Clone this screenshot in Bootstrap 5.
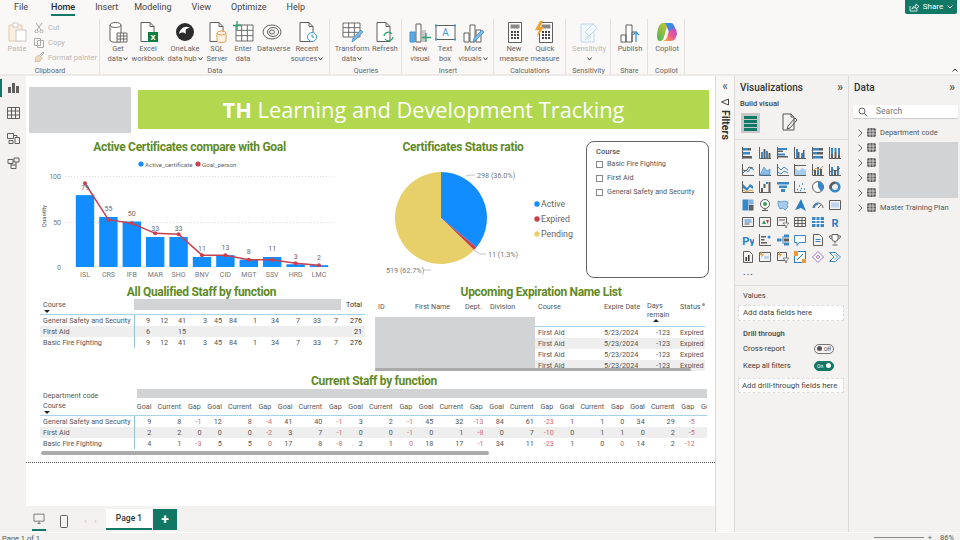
<!DOCTYPE html>
<html lang="en">
<head>
  <meta charset="UTF-8">
  <title>TH Learning and Development Tracking</title>
  <link href="https://cdn.jsdelivr.net/npm/bootstrap@5.3.3/dist/css/bootstrap.min.css" rel="stylesheet">
  <style>
    html, body { height: 540px; overflow: hidden; }
    body { font-family: "Roboto", "Liberation Sans", sans-serif; font-size: 7.6px; color: #3b3a39; background: #f3f2f1; line-height: 10px; }
    svg { display: block; }
    .pb-menu { height: 16px; background: #f9f8f7; padding-left: 14px; font-size: 9px; line-height: 15px; color: #444; }
    .pb-menu-item { white-space: nowrap; }
    .pb-menu-on { font-weight: 500; color: #252423; border-bottom: 2px solid #117865; height: 16px; }
    .pb-share { background: #117865; color: #fff; width: 52px; height: 14px; margin: 0 3px 0 auto; border-radius: 0 0 2px 2px; font-size: 8px; line-height: 14px; }
    .pb-ribbon { height: 60px; background: #f9f8f7; border-bottom: 2px solid #eceae8; color: #666; }
    .pb-group { height: 58px; padding-top: 5px; position: relative; }
    .pb-group::after { content: ""; position: absolute; right: 0; top: 3px; bottom: 0; width: 1px; background: #e3e1df; }
    .pb-glabel { position: absolute; left: 0; right: 0; top: 50px; text-align: center; font-size: 7.2px; color: #666; }
    .pb-rbtn { text-align: center; font-size: 7.5px; white-space: nowrap; }
    .pb-rbtn svg { margin: 0 auto 1px; }
    .pb-off { color: #b9b7b5; }
    .pb-small { height: 15px; font-size: 7.5px; color: #b9b7b5; white-space: nowrap; }
    .pb-collapse { margin: auto 2px 2px auto; }
    .pb-rail { width: 26px; background: #f3f2f1; border-left: 2px solid transparent; position: relative; }
    .pb-rail::before { content: ""; position: absolute; left: -2px; top: 3px; width: 2px; height: 18px; background: #117865; }
    .pb-rail svg { margin: 6px 0 0 5px; }
    .pb-center { width: 689px; }
    .pb-canvas { height: 430px; background: #fff; }
    .pb-report { height: 387px; border-bottom: 1px dotted #555; overflow: hidden; }
    .pb-photo { background: #d2d3d5; }
    .pb-banner { width: 571px; height: 39px; margin: 3px 0 0 7px; background: #b1d84f; color: #fff; font-family: "Open Sans", sans-serif; font-size: 21.8px; line-height: 39px; text-align: center; white-space: nowrap; }
    .pb-title { font-size: 12px; letter-spacing: -.3px; font-weight: 700; color: #5f8a26; text-align: center; line-height: 14px; white-space: nowrap; }
    .pb-slicer { width: 123px; height: 137px; margin: 2px 0 0 4px; border: 1px solid #666; border-radius: 8px; padding: 5px 9px; color: #555; }
    .pb-check { width: 7px; height: 7px; border: 1px solid #888; margin-right: 4px; flex: none; }
    .pb-slrow { height: 14px; font-size: 7.2px; white-space: nowrap; }
    .pb-tbl.table { --bs-table-bg: transparent; --bs-table-color: #555; color: #555; table-layout: fixed; margin: 0; font-size: 7.2px; line-height: 11px; border-color: transparent; }
    .pb-tbl.table > :not(caption) > * > * { padding: 0 3px; border: 0; white-space: nowrap; overflow: hidden; font-weight: 400; box-shadow: none; }
    .pb-tbl.table > thead > tr > .pb-tight { padding: 0; }
    .pb-tbl.table > tbody > tr > .pb-pad7 { padding-right: 7px; }
    .pb-tbl tr.pb-alt { --bs-table-bg: #eeeeee; }
    .pb-tbl .pb-num { text-align: right; }
    .pb-tbl .pb-first { text-align: left; padding-left: 3px; border-right: 1px solid #8cc4e3 !important; }
    .pb-tbl .pb-headline > * { border-bottom: 1px solid #a7d3ea !important; }
    .pb-tbl .pb-bold { font-weight: 700; color: #333; }
    .pb-tbl .pb-neg { color: #cf6f7c; }
    .pb-caret { width: 0; height: 0; border: 3px solid transparent; border-top-color: #222; margin: 0 0 -4px 1px; }
    .pb-caret-up { width: 0; height: 0; border: 3px solid transparent; border-bottom-color: #222; margin: -3px 0 0 6px; }
    .pb-wrap1 { width: 325px; margin-left: 14px; }
    .pb-wrap2 { width: 330px; margin-left: 10px; position: relative; }
    .pb-clip2 { height: 70px; overflow: hidden; }
    .pb-cover { position: absolute; left: 0; top: 32px; width: 160px; height: 54px; }
    .pb-scroll2 { position: absolute; left: 0; top: 83px; width: 316px; height: 3px; background: #aaa; border-radius: 2px; }
    .pb-dot { position: absolute; right: 0; top: 18px; width: 3px; height: 3px; background: #999; border-radius: 50%; }
    .pb-wrap3 { width: 667px; margin-left: 14px; overflow: hidden; }
    .pb-wrap3 table { width: 692px !important; }
    .pb-scroll3 { width: 448px; height: 4px; margin: 2px 0 0 1px; background: #aaa; border-radius: 2px; }
    .pb-tabs { height: 23px; margin-top: 3px; background: #f3f2f1; }
    .pb-tab { width: 46px; height: 21px; background: #fff; border-bottom: 2px solid #117865; line-height: 19px; text-align: center; font-size: 8.5px; font-weight: 500; color: #333; }
    .pb-add { width: 24px; height: 21px; background: #117865; color: #fff; font-size: 14px; font-weight: 700; line-height: 20px; text-align: center; margin-left: 1px; }
    .pb-filters { width: 20px; background: #f9f8f7; border-left: 1px solid #dcdad8; border-right: 1px solid #dcdad8; }
    .pb-ftext { writing-mode: vertical-rl; font-size: 10.5px; font-weight: 700; color: #333; line-height: 18px; }
    .pb-viz { width: 114px; border-right: 1px solid #dcdad8; }
    .pb-data { width: 111px; }
    .pb-phead { height: 14px; margin-top: 5px; padding: 0 5px; font-size: 10px; font-weight: 500; line-height: 14px; color: #333; }
    .pb-chev { color: #555; font-size: 12px; line-height: 12px; }
    .pb-sub { font-size: 7.6px; font-weight: 500; color: #444; }
    .pb-vbtn { height: 20px; }
    .pb-vbtn-on { width: 19px; height: 20px; background: #c8c8c8; padding: 3px; }
    .pb-stripe { background: #117865; height: 3px; margin-bottom: 1px; }
    .pb-vgrid { display: grid; grid-template-columns: repeat(6, 17.5px); grid-auto-rows: 17.4px; padding-left: 4px; margin-top: 4px; }
    .pb-vcell { display: flex; align-items: center; justify-content: center; }
    .pb-line { border-top: 1px solid #dedcda; }
    .pb-field { width: 106px; margin-left: 3px; background: #fff; border: 1px dashed #ddd; font-size: 7.8px; color: #444; padding-left: 4px; }
    .pb-toggle { width: 20px; height: 10px; border-radius: 5px; border: 1px solid #777; font-size: 5px; line-height: 8px; padding: 0 2px; }
    .pb-toggle-on { background: #117865; border-color: #117865; color: #fff; }
    .pb-knob { width: 5px; height: 5px; border-radius: 50%; background: #555; flex: none; }
    .pb-search { height: 13px; margin: 10px 2px 0 4px; background: #fff; border-radius: 2px; box-shadow: 0 1px 1px #ccc; color: #777; font-size: 8.5px; line-height: 13px; padding-left: 5px; }
    .pb-tree { position: relative; margin-top: 7px; }
    .pb-trow { height: 15px; padding-left: 9px; font-size: 7.5px; color: #555; white-space: nowrap; }
    .pb-tcover { position: absolute; left: 30px; top: 17px; width: 79px; height: 56px; }
    .pb-status { height: 8px; background: #f3f2f1; border-top: 1px solid #fff; font-size: 7.5px; line-height: 11px; color: #555; padding-left: 2px; overflow: hidden; }
  </style>
</head>
<body>

  <!-- menu -->
  <div class="pb-menu d-flex">
    <div class="pb-menu-item" style="width:37px">File</div>
    <div class="pb-menu-item pb-menu-on">Home</div>
    <div class="pb-menu-item ms-3 ps-1">Insert</div>
    <div class="pb-menu-item ms-3">Modeling</div>
    <div class="pb-menu-item ms-3 ps-1">View</div>
    <div class="pb-menu-item ms-3 ps-1">Optimize</div>
    <div class="pb-menu-item ms-3 ps-1">Help</div>
    <div class="pb-share d-flex align-items-center justify-content-center gap-1">
      <svg width="10" height="9" viewBox="0 0 10 9" fill="none" stroke="#fff" stroke-width=".8"><path d="M1 3v5h7V6M3 6c0-2 2-3 4-3V1l3 2.5L7 6V4.500C5 4.500 4 5 3 6z"/></svg>
      Share
      <svg width="6" height="4" viewBox="0 0 6 4" fill="none" stroke="#fff"><path d="M.5.500 3 3 5.500.500"/></svg>
    </div>
  </div>

  <!-- ribbon, filled from script -->
  <div class="pb-ribbon d-flex" id="ribbon"></div>

  <div class="d-flex" style="height:456px">
    <!-- left rail -->
    <div class="pb-rail">
      <svg width="13" height="12" viewBox="0 0 13 12" style="margin-top:6px"><path d="M1 11V5h3v6zM5 11V1h3v10zM9 11V4h3v7z" fill="#605e5c"/></svg>
      <svg width="13" height="12" viewBox="0 0 13 12" fill="none" stroke="#605e5c" style="margin-top:13px"><path d="M.5.500h12v11H.5zM.5 4h12M.5 8h12M4.500 .5v11M8.500 .5v11"/></svg>
      <svg width="13" height="12" viewBox="0 0 13 12" fill="none" stroke="#605e5c" style="margin-top:13px"><path d="M.5 1.500h6v5h-6zM8 5.500h4.500v6H8zM2 8.500h4v3H2zM6.500 3.500H10v2"/></svg>
      <svg width="13" height="12" viewBox="0 0 13 12" fill="none" stroke="#605e5c" style="margin-top:13px"><path d="M1 2.500h5v4H1zM7 1h5v4H7zM4 8h5v3.500H4zM4 6.500V8M9 5v3"/></svg>
    </div>

    <div class="pb-center">
      <div class="pb-canvas">
        <div class="pb-report">
          <!-- header -->
          <div class="d-flex" style="padding:11px 0 0 3px;height:63px">
            <div class="pb-photo" style="width:102px;height:46px"></div>
            <div class="pb-banner"><b>TH</b> Learning and Development Tracking</div>
          </div>
          <!-- charts row -->
          <div class="d-flex" style="height:146px">
            <svg id="barchart" width="330" height="146" viewBox="26 139 330 146"></svg>
            <svg id="piechart" width="226" height="146" viewBox="356 139 226 146"></svg>
            <div class="pb-slicer">
              <div style="font-size:7.6px;font-weight:500">Course</div>
              <div class="pb-slrow d-flex align-items-center"><span class="pb-check"></span>Basic Fire Fighting</div>
              <div class="pb-slrow d-flex align-items-center"><span class="pb-check"></span>First Aid</div>
              <div class="pb-slrow d-flex align-items-center"><span class="pb-check"></span>General Safety and Security</div>
            </div>
          </div>
          <!-- tables row -->
          <div class="d-flex" style="height:90px">
            <div class="pb-wrap1">
              <div class="pb-title" style="margin-left:-2px">All Qualified Staff by function</div>
              <table class="table pb-tbl" id="tblQualified"></table>
            </div>
            <div class="pb-wrap2">
              <div class="pb-title" style="margin-bottom:2px;padding-left:2px">Upcoming Expiration Name List</div>
              <div class="pb-clip2">
                <table class="table pb-tbl" id="tblExpire"></table>
              </div>
              <div class="pb-cover pb-photo"></div>
              <div class="pb-scroll2"></div>
              <div class="pb-dot"></div>
            </div>
          </div>
          <!-- bottom matrix -->
          <div class="pb-title" style="margin-top:-1px;padding-bottom:1px;width:696px">Current Staff by function</div>
          <div class="pb-wrap3">
            <table class="table pb-tbl" id="tblCurrent"></table>
            <div class="pb-scroll3"></div>
          </div>
        </div>
      </div>
      <!-- page tabs -->
      <div class="pb-tabs d-flex">
        <div class="d-flex align-items-center" style="width:80px;padding:2px 0 0 6px">
          <svg width="14" height="18" viewBox="0 0 14 18" fill="none" stroke="#605e5c" style="border-bottom:2px solid #117865;padding-bottom:2px"><path d="M.5 1.500h13v9H.5zM5 13.500h4M7 10.500v3"/></svg>
          <svg width="8" height="13" viewBox="0 0 8 13" fill="none" stroke="#605e5c" style="margin-left:14px"><rect x=".5" y=".5" width="7" height="12" rx="1"/></svg>
          <span class="ms-3" style="color:#bbb;font-size:8px;white-space:nowrap">&lsaquo;&nbsp;&nbsp;&nbsp;&nbsp;&rsaquo;</span>
        </div>
        <div class="pb-tab">Page 1</div>
        <div class="pb-add">+</div>
      </div>
    </div>

    <!-- filters strip -->
    <div class="pb-filters d-flex flex-column align-items-center">
      <div class="pb-chev" style="margin-top:4px">&laquo;</div>
      <svg width="8" height="8" viewBox="0 0 8 8" fill="none" stroke="#444" style="margin-top:6px"><path d="M.5 4 7.500 1v6z"/></svg>
      <div class="pb-ftext" style="margin-top:4px">Filters</div>
    </div>

    <!-- visualizations -->
    <div class="pb-viz">
      <div class="pb-phead d-flex justify-content-between"><span>Visualizations</span><span class="pb-chev">&raquo;</span></div>
      <div class="pb-sub" style="margin:4px 0 0 5px;height:12px">Build visual</div>
      <div class="pb-vbtn d-flex" style="margin:2px 0 0 6px">
        <div class="pb-vbtn-on"><div class="pb-stripe"></div><div class="pb-stripe"></div><div class="pb-stripe"></div><div class="pb-stripe"></div></div>
        <svg width="16" height="18" viewBox="0 0 16 18" fill="none" stroke="#555" style="margin-left:22px"><path d="M1 1h8l3 3v13H1zM9 1v3h3M6 13l7-8 2 2-7 8-3 1z"/></svg>
      </div>
      <div class="pb-line" style="margin-top:6px"></div>
      <div class="pb-vgrid" id="vizGrid"></div>
      <div style="margin:1px 0 0 8px;font-size:10px;letter-spacing:1px;height:13px;line-height:10px">...</div>
      <div class="pb-line" style="margin-top:5px"></div>
      <div class="pb-sub" style="margin:5px 0 0 8px;font-weight:400;height:12px">Values</div>
      <div class="pb-field" style="height:16px;line-height:14px;margin-top:2px">Add data fields here</div>
      <div class="pb-sub" style="margin:8px 0 0 8px;height:10px">Drill through</div>
      <div class="d-flex justify-content-between align-items-center" style="margin:5px 14px 0 8px;height:10px">Cross-report
        <div class="pb-toggle d-flex align-items-center justify-content-between"><span class="pb-knob"></span>Off</div></div>
      <div class="d-flex justify-content-between align-items-center" style="margin:7px 14px 0 8px;height:10px">Keep all filters
        <div class="pb-toggle pb-toggle-on d-flex align-items-center justify-content-between">On<span class="pb-knob bg-white"></span></div></div>
      <div class="pb-field" style="height:15px;line-height:13px;margin-top:7px;padding-left:3px">Add drill-through fields here</div>
    </div>

    <!-- data -->
    <div class="pb-data">
      <div class="pb-phead d-flex justify-content-between"><span>Data</span><span class="pb-chev">&raquo;</span></div>
      <div class="pb-search d-flex align-items-center gap-1">
        <svg width="10" height="10" viewBox="0 0 10 10" fill="none" stroke="#666"><circle cx="4" cy="4" r="3"/><path d="m6.300 6.300 3 3"/></svg>
        <span class="ms-1">Search</span>
      </div>
      <div class="pb-tree" id="tree"></div>
    </div>
  </div>

  <div class="pb-status d-flex">
    <span>Page 1 of 1</span>
    <span class="ms-auto d-flex align-items-center gap-1" style="padding-right:6px;height:8px">
      <span style="width:50px;height:1px;background:#888"></span>
      <span style="color:#555">+</span><span class="ms-1">86%</span>
    </span>
  </div>

  <script>
    // --- ribbon ---
    const G = '#605e5c', B = '#3f94d6', GR = '#2f9e6b', O = '#e0a050';
    const docPath = `<path d="M4 1.500h9l4 4v15H4zM13 1.500v4h4" fill="#fff" stroke="${G}"/>`;
    const grid = (x, y, w, h, c) => `<path d="M${x} ${y}h${w}v${h}h-${w}zM${x} ${y + h / 3}h${w}M${x} ${y + 2 * h / 3}h${w}M${x + w / 3} ${y}v${h}M${x + 2 * w / 3} ${y}v${h}" fill="#fff" stroke="${c}" stroke-width=".9"/>`;
    const calc = `<path d="M5.500 1.500h13v20h-13z" fill="#fff" stroke="${G}"/><path d="M7.500 3.500h9v4h-9z" fill="#8a8886"/><path d="M8 10h2v2H8zM11 10h2v2h-2zM14 10h2v2h-2zM8 13h2v2H8zM11 13h2v2h-2zM14 13h2v2h-2zM8 16h2v2H8zM11 16h2v2h-2zM14 16h2v2h-2z" fill="#444"/>`;
    const bars = (c) => `<path d="M2 21V12h5v9zM8 21V4h5v17zM14 21V9h5v12z" fill="#fff" stroke="${c}"/>`;
    const pencil = `<path d="m11 21 1-4 8-8 2 2-8 8z" fill="#7db8e8" stroke="${B}" stroke-width=".8"/>`;
    const icons = {
      getdata: `<path d="M3 4v15c0 3 11 3 11 0V4" fill="#fff" stroke="${G}"/><ellipse cx="8.500" cy="4" rx="5.500" ry="2.500" fill="#fff" stroke="${G}"/>` + grid(10, 12, 10, 9, G),
      excel: docPath + `<rect x="11" y="11" width="10" height="10" fill="#107c41"/><text x="16" y="19" font-size="8" font-weight="700" fill="#fff" text-anchor="middle">X</text>`,
      onelake: `<circle cx="11" cy="11" r="9" fill="#2b2b2b"/><path d="M5 13c1-6 7-9 11-6-4 0-5 2-4 6-2-2-5-2-7 0z" fill="#fff"/>`,
      sql: docPath + `<path d="M11 12v8c0 2 9 2 9 0v-8" fill="#fdf1e3" stroke="${O}"/><ellipse cx="15.500" cy="12" rx="4.500" ry="2" fill="#fdf1e3" stroke="${O}"/>`,
      enter: grid(4, 4, 17, 16, G) + `<path d="M5 0v9M1 4.500h9" stroke="${GR}" stroke-width="1.300"/>`,
      dataverse: `<g fill="none" stroke="${G}"><ellipse cx="11" cy="11" rx="9" ry="7"/><ellipse cx="12" cy="11" rx="5.500" ry="4.500"/><ellipse cx="11" cy="11" rx="2.500" ry="2"/></g>`,
      recent: docPath + `<circle cx="16" cy="16" r="4.500" fill="#fff" stroke="${B}"/><path d="M16 13.500V16h2" fill="none" stroke="${B}"/>`,
      transform: grid(2, 2, 17, 14, G) + pencil,
      refresh: docPath + `<path d="M11 15a4.500 4.500 0 0 1 8-2M20 16a4.500 4.500 0 0 1-8 2" fill="none" stroke="${GR}" stroke-width="1.200"/>`,
      newvisual: `<path d="M1 21V11h5v10z" fill="#5ea8e5" stroke="${B}"/><path d="M7 21V3h5v18z" fill="#fff" stroke="${G}"/><path d="M13 21V9h4v12z" fill="#c8c6c4"/><path d="M17 12v9M13 16.500h9" stroke="${GR}" stroke-width="1.300"/>`,
      textbox: `<path d="M2 4.500h19v14H2z" fill="#fff" stroke="${G}"/><path d="M1 3.500h2v2H1zM20 3.500h2v2h-2zM1 17.500h2v2H1zM20 17.500h2v2h-2z" fill="${B}"/><text x="11.500" y="15" font-size="10" fill="${B}" text-anchor="middle">A</text>`,
      more: bars(G) + pencil,
      measure: calc,
      quick: calc + `<path d="M6 0 1 9h4l-2 7 7-10H6l3-6z" fill="#f0a030"/>`,
      sens: `<path d="M3 3h13v18H3z" fill="#f3f8fc" stroke="#bcd8ee"/><path d="m7 11 8-8 4 4-8 8z" fill="#f3f8fc" stroke="#bcd8ee"/><path d="M7 16h6M7 18h4" stroke="#bcd8ee"/>`,
      publish: `<path d="M2 21v-7h5v7zM7 21V4h6v17zM13 21V11h4" fill="#fff" stroke="${G}"/><path d="M17 21V11M14 14l3-3 3 3" fill="none" stroke="${B}" stroke-width="1.300"/>`,
      copilot: `<defs><linearGradient id="cpA" x1="0" y1="0" x2="1" y2="1"><stop offset="0" stop-color="#1fa3e8"/><stop offset="1" stop-color="#6f5bd8"/></linearGradient><linearGradient id="cpB" x1="0" y1="1" x2="1" y2="0"><stop offset="0" stop-color="#f5b72f"/><stop offset=".5" stop-color="#ef5a8c"/><stop offset="1" stop-color="#b04fd0"/></linearGradient><linearGradient id="cpC" x1="0" y1="1" x2="1" y2="0"><stop offset="0" stop-color="#3fb950"/><stop offset="1" stop-color="#f2c230"/></linearGradient></defs><path d="M7 2h8c-3 1-4 3-5 7l-2 7c-.5 2-2 4-4 4-2 0-3-2-3-5C1 9 3 2 7 2z" fill="url(#cpC)"/><path d="M8 2h7c2 0 3 2 4 5l2 7h-7L11 6C10.500 4 9.500 2.500 8 2z" fill="url(#cpA)"/><path d="M14 20H7c3-1 4-3 5-7l1-3c.5-1 1.500-2 3-2h4c1 3 1 6 0 8-1 3-3 4-6 4z" fill="url(#cpB)"/>`
    };
    const chev = '<svg width="5" height="4" viewBox="0 0 5 4" fill="none" stroke="#444" style="display:inline;margin:0 0 1px 1px"><path d="M.5.500 2.500 3 4.500.500"/></svg>';
    const ribbon = [
      { label: 'Data', w: 230, pad: 5, btns: [
        ['getdata', 'Get', 'data' + chev, 26], ['excel', 'Excel', 'workbook', 34], ['onelake', 'OneLake', 'data hub' + chev, 40],
        ['sql', 'SQL', 'Server', 24], ['enter', 'Enter', 'data', 28], ['dataverse', 'Dataverse', '', 30], ['recent', 'Recent', 'sources' + chev, 40]] },
      { label: 'Queries', w: 72, pad: 2, btns: [['transform', 'Transform', 'data' + chev, 40], ['refresh', 'Refresh', '', 24]] },
      { label: 'Insert', w: 92, pad: 5, btns: [['newvisual', 'New', 'visual', 26], ['textbox', 'Text', 'box', 24], ['more', 'More', 'visuals' + chev, 32]] },
      { label: 'Calculations', w: 72, pad: 4, btns: [['measure', 'New', 'measure', 32], ['quick', 'Quick', 'measure', 30]] },
      { label: 'Sensitivity', w: 45, pad: 1, btns: [['sens', 'Sensitivity', chev, 44, true]] },
      { label: 'Share', w: 37, pad: 1, btns: [['publish', 'Publish', '', 36]] },
      { label: 'Copilot', w: 37, pad: 1, btns: [['copilot', 'Copilot', '', 36]] }
    ];
    const smallIcon = {
      cut: '<path d="M2 1l5 7M8 1 3 8" stroke="#aaa" fill="none"/><circle cx="2.500" cy="9.500" r="1.500" fill="none" stroke="#aaa"/><circle cx="7.500" cy="9.500" r="1.500" fill="none" stroke="#aaa"/>',
      copy: '<path d="M.5 1.500h6v7h-6zM3.500 3.500h6v7h-6z" fill="#f9f8f7" stroke="#aaa"/>',
      paint: '<path d="M1 6l4-3 3 3-3 4-2-1-2 1 1-2z" fill="#f0d8b8" stroke="#c9b08f" stroke-width=".7"/><path d="m6 3 3-3 1 1-3 3" stroke="#aaa" fill="none"/>'
    };
    const small = (ic, t) => `<div class="pb-small d-flex align-items-center gap-1"><svg width="10" height="11" viewBox="0 0 10 11">${smallIcon[ic]}</svg>${t}</div>`;
    let ribbonHtml = `<div class="pb-group d-flex" style="width:100px">
        <div class="pb-rbtn pb-off" style="width:34px"><svg width="22" height="22" viewBox="0 0 22 22"><path d="M3 4h13v16H3z" fill="#fbeee0" stroke="#e6c8a5"/><path d="M7 2h5v4H7z" fill="#fff" stroke="#ccc"/><path d="M10 9h10v11H10z" fill="#fff" stroke="#c8c8c8"/></svg><div>Paste</div></div>
        <div style="margin-top:-1px">${small('cut', 'Cut')}${small('copy', 'Copy')}${small('paint', 'Format painter')}</div>
        <div class="pb-glabel">Clipboard</div></div>`;
    ribbon.forEach(g => {
      ribbonHtml += `<div class="pb-group d-flex" style="width:${g.w}px;padding-left:${g.pad}px">` + g.btns.map(b =>
        `<div class="pb-rbtn${b[4] ? ' pb-off' : ''}" style="width:${b[3]}px"><svg width="22" height="22" viewBox="0 0 22 22">${icons[b[0]]}</svg><div>${b[1]}</div><div>${b[2]}</div></div>`
      ).join('') + `<div class="pb-glabel">${g.label}</div></div>`;
    });
    ribbonHtml += '<svg class="pb-collapse" width="6" height="4" viewBox="0 0 6 4" fill="none" stroke="#333"><path d="M.5 3.500 3 1l2.500 2.500"/></svg>';
    document.getElementById('ribbon').innerHTML = ribbonHtml;

    // --- bar and line chart ---
    const cats = ['ISL', 'CRS', 'IFB', 'MAR', 'SHO', 'BNV', 'CID', 'MGT', 'SSV', 'HRD', 'LMC'];
    const active = [79, 55, 50, 33, 33, 11, 13, 8, 11, 3, 2];
    const goal = [92, 52, 48, 37, 36, 13, 13, 8, 8, 4, 2];
    const yOf = v => 267 - v * 0.91;
    const xOf = i => 85 + i * 23.4;
    const txt = (x, y, s, size, fill, anchor, extra) => `<text x="${x}" y="${y}" font-size="${size}" fill="${fill}" text-anchor="${anchor || 'start'}" ${extra || ''}>${s}</text>`;
    const titleAttr = 'font-weight="700" letter-spacing="-.3"';
    let bar = txt(189.500, 151, 'Active Certificates compare with Goal', 12, '#5f8a26', 'middle', titleAttr);
    bar += `<circle cx="141" cy="164" r="2.600" fill="#118dff"/>` + txt(145, 166.500, 'Active_certificate', 6.200, '#666');
    bar += `<circle cx="198" cy="164" r="2.600" fill="#c9404e"/>` + txt(202, 166.500, 'Goal_person', 6.200, '#666');
    [[100, 176], [50, 222], [0, 267]].forEach(a => {
      bar += txt(61, a[1] + 2.500, a[0], 7, '#777', 'end');
      if (a[0]) bar += `<path d="M65 ${a[1] + .5}H335" stroke="#ddd" stroke-dasharray="1 2"/>`;
    });
    bar += txt(0, 0, 'Quantity', 6, '#555', 'middle', 'transform="translate(46 216) rotate(-90)"');
    cats.forEach((c, i) => {
      bar += `<rect x="${xOf(i) - 9.200}" y="${yOf(active[i])}" width="18.400" height="${267 - yOf(active[i])}" fill="#118dff"/>`;
      bar += txt(xOf(i), 276.500, c, 7, '#777', 'middle');
    });
    const pts = goal.map((g, i) => `${xOf(i)},${yOf(g)}`).join(' ');
    bar += `<polyline points="${pts}" fill="none" stroke="#c9404e" stroke-width="1.500"/>`;
    goal.forEach((g, i) => bar += `<circle cx="${xOf(i)}" cy="${yOf(g)}" r="2" fill="#c9404e"/>`);
    active.forEach((v, i) => bar += txt(xOf(i), yOf(v) - 5.500, v, 7, '#666', 'middle'));
    document.getElementById('barchart').innerHTML = bar;

    // --- pie ---
    const cx = 441, cy = 218, r = 46;
    const polar = f => { const a = f * 2 * Math.PI - Math.PI / 2; return [cx + r * Math.cos(a), cy + r * Math.sin(a)]; };
    const slice = (f0, f1, c) => {
      const p0 = polar(f0), p1 = polar(f1);
      return `<path d="M${cx} ${cy}L${p0[0]} ${p0[1]}A${r} ${r} 0 ${f1 - f0 > .5 ? 1 : 0} 1 ${p1[0]} ${p1[1]}Z" fill="${c}"/>`;
    };
    let pie = txt(463, 151, 'Certificates Status ratio', 12, '#5f8a26', 'middle', titleAttr);
    pie += slice(0, .36, '#118dff') + slice(.36, .373, '#c9404e') + slice(.373, 1, '#e7d06a');
    pie += `<path d="M466 176l4-1h5M474 250l6 4h6M424 270h7" fill="none" stroke="#aaa" stroke-width=".7"/>`;
    pie += txt(477, 178, '298 (36.0%)', 7.200, '#777') + txt(488, 256.500, '11 (1.3%)', 7.200, '#777') + txt(386, 273, '519 (62.7%)', 7.200, '#777');
    [['Active', '#118dff', 204], ['Expired', '#c9404e', 219], ['Pending', '#e7d06a', 234]].forEach(l => {
      pie += `<circle cx="537" cy="${l[2]}" r="2.700" fill="${l[1]}"/>` + txt(541, l[2] + 3, l[0], 8.800, '#666');
    });
    document.getElementById('piechart').innerHTML = pie;

    // --- tables ---
    const colgroup = w => '<colgroup>' + w.map(v => `<col style="width:${v}px">`).join('') + '</colgroup>';
    const firstHead = '<div class="d-flex flex-column" style="line-height:10px">Course<span class="pb-caret"></span></div>';

    const qualW = [94, 19, 18, 18, 21, 15, 15, 20, 22, 21, 21, 17, 24];
    const qual = [
      ['General Safety and Security', 9, 12, 41, 3, 45, 84, 1, 34, 7, 33, 7, 276],
      ['First Aid', 6, '', 15, '', '', '', '', '', '', '', '', 21],
      ['Basic Fire Fighting', 9, 12, 41, 3, 45, 84, 1, 34, 7, 33, 7, 276]
    ];
    let t1 = colgroup(qualW) + `<thead><tr class="pb-headline" style="height:15px"><th class="align-top" style="padding-top:1px">${firstHead}</th><th colspan="11" class="align-top pb-tight"><div class="pb-photo" style="height:11px"></div></th><th class="pb-num pb-bold align-top">Total</th></tr></thead><tbody>`;
    qual.forEach((row, i) => {
      t1 += `<tr class="${i === 1 ? 'pb-alt' : ''}">` + row.map((v, j) => {
        if (j === 0) return `<td class="pb-first">${v}</td>`;
        return `<td class="pb-num${j === 12 ? ' pb-bold' : ''}">${v}</td>`;
      }).join('') + '</tr>';
    });
    document.getElementById('tblQualified').innerHTML = t1 + '</tbody>';

    const expW = [37, 50, 25, 48, 66, 43, 33, 28];
    const rowsExp = [1, 2, 3, 4].map(i => `<tr class="${i % 2 === 0 ? 'pb-alt' : ''}"><td></td><td></td><td></td><td></td><td>First Aid</td><td>5/23/2024</td><td class="pb-num pb-pad7">-123</td><td>Expired</td></tr>`).join('');
    document.getElementById('tblExpire').innerHTML = colgroup(expW) +
      `<thead><tr class="pb-headline" style="height:25px"><th class="align-top">ID</th><th class="align-top">First Name</th><th class="align-top">Dept.</th><th class="align-top">Division</th><th class="align-top">Course</th><th class="align-top">Expire Date</th><th class="align-top" style="white-space:normal;line-height:9px">Days remain<div class="pb-caret-up"></div></th><th class="align-top">Status</th></tr></thead><tbody>${rowsExp}</tbody>`;

    const cur = [
      ['General Safety and Security', 9, 8, -1, 12, 8, -4, 41, 40, -1, 3, 2, -1, 45, 32, -13, 84, 61, -23, 1, 1, 0, 34, 29, -5],
      ['First Aid', 2, 2, 0, 0, 0, -2, 3, 7, -1, 0, 0, -1, 0, 1, -8, 0, 7, -10, 0, 1, 1, 0, 2, -5],
      ['Basic Fire Fighting', 4, 1, -3, 5, 5, 0, 17, 8, -8, 2, 1, 0, 18, 17, -1, 34, 11, -23, 1, 0, 0, 14, 2, -12]
    ];
    const curW = [94];
    for (let i = 0; i < 8; i++) curW.push(20.300, 30, 20.200);
    curW.push(34);
    let t3 = colgroup(curW) + '<thead><tr style="height:12px"><th class="align-bottom">Department code</th><th colspan="25" class="align-top pb-tight"><div class="pb-photo" style="height:9px;margin:0 7px 0 3px"></div></th></tr>';
    t3 += `<tr class="pb-headline" style="height:14px"><th class="align-top">${firstHead}</th>`;
    for (let i = 0; i < 8; i++) t3 += '<th class="text-center align-top pb-tight">Goal</th><th class="text-center align-top pb-tight">Current</th><th class="text-center align-top pb-tight">Gap</th>';
    t3 += '<th class="align-top">Goal</th></tr></thead><tbody>';
    const pinkZero = { '2-6': 1, '2-12': 1, '2-21': 1 };
    cur.forEach((row, i) => {
      t3 += `<tr class="${i === 1 ? 'pb-alt' : ''}">` + row.map((v, j) => {
        if (j === 0) return `<td class="pb-first">${v}</td>`;
        const neg = v < 0 || pinkZero[i + '-' + j];
        return `<td class="pb-num${neg ? ' pb-neg' : ''}">${v}</td>`;
      }).join('') + '<td></td></tr>';
    });
    document.getElementById('tblCurrent').innerHTML = t3 + '</tbody>';

    // --- visualization gallery ---
    const b = '#3a87c8', g = '#605e5c', o = '#e89a3c', p = '#a070c8';
    const R = (x, y, w, h, c) => `<rect x="${x}" y="${y}" width="${w}" height="${h}" fill="${c}"/>`;
    const L = (d, c) => `<path d="${d}" fill="none" stroke="${c}"/>`;
    const ax = L('M.5 0v11.500H12', g);
    const T = (x, y, s, size, c) => `<text x="${x}" y="${y}" font-size="${size}" font-weight="700" fill="${c}" text-anchor="middle">${s}</text>`;
    const box = L('M.5 1.500h11v9H.5z', g);
    const viz = [
      L('M.5 0v12', g) + R(1, 1, 5, 2.500, b) + R(6, 1, 3, 2.500, g) + R(1, 5, 7, 2.500, b) + R(1, 9, 9, 2.500, g),
      ax + R(2, 5, 2, 6, b) + R(4.500, 2, 2, 9, g) + R(7, 4, 2, 7, b) + R(9.500, 6, 2, 5, g),
      L('M.5 0v12', g) + R(1, 1, 9, 2, b) + R(1, 3.500, 5, 1.500, g) + R(1, 6.500, 7, 2, b) + R(1, 9, 10, 1.500, g),
      ax + R(2, 2, 2, 9, b) + R(4, 5, 1.500, 6, g) + R(7, 6, 2, 5, b) + R(9, 3, 1.500, 8, g),
      L('M.5 0v12', g) + R(1, 1, 6, 2.500, b) + R(7, 1, 4, 2.500, g) + R(1, 5, 4, 2.500, b) + R(5, 5, 6, 2.500, g) + R(1, 9, 8, 2.500, b) + R(9, 9, 2, 2.500, g),
      ax + R(2, 1, 2, 6, b) + R(2, 7, 2, 4, g) + R(5.500, 1, 2, 4, b) + R(5.500, 5, 2, 6, g) + R(9, 1, 2, 7, b) + R(9, 8, 2, 3, g),
      ax + L('M1 9l3-3 2 2 3-4 3 2', b) + L('M1 6l3 1 3-4 4 1', g),
      ax + `<path d="M1 11 5 3l3 4 3-2v6z" fill="#8cbde8" stroke="${b}" stroke-width=".6"/>`,
      ax + L('M1 3l3 3 3-3 4 3', b) + L('M1 8l3 2 3-3 4 2', b),
      ax + `<path d="M1 4l4 3 3-3 4 2v5H1z" fill="#a8cdec"/>` + L('M1 1.500h11', g),
      ax + R(2, 6, 2, 5, g) + R(5, 3, 2, 8, b) + R(8, 5, 2, 6, g) + L('M1 7l3-3 3 2 4-4', o),
      ax + R(2, 3, 2, 8, b) + R(5, 6, 2, 5, g) + R(8, 2, 2, 9, b) + L('M1 8l3-2 3 1 4-3', g),
      ax + `<path d="M1 3l4 4 3-4 3 2v3L8 6 5 10 1 7z" fill="${b}"/><path d="M1 9l4 2 3-2 3 1" fill="none" stroke="${o}"/>`,
      ax + R(2, 7, 2, 4, g) + R(4.500, 3, 2, 4, g) + R(7, 1, 2, 2, b) + R(9.500, 1, 2, 10, g),
      R(0, 1, 12, 2.500, b) + R(2, 4.500, 8, 2.500, b) + R(4, 8, 4, 3, b),
      ax + `<path d="M3 8.500h1M5 5h1M7 7.500h1M8 3h1M10 8h1M6 9.500h1" stroke="${b}" stroke-width="1.300"/>`,
      `<circle cx="6" cy="6" r="5.500" fill="#fff" stroke="${g}"/><path d="M6 6V.5a5.500 5.500 0 0 1 3 10z" fill="${b}"/>`,
      `<circle cx="6" cy="6" r="4.300" fill="none" stroke="${b}" stroke-width="2.600"/><path d="M6 1.700a4.300 4.300 0 0 0-4 6" fill="none" stroke="${g}" stroke-width="2.600"/>`,
      R(.5, .5, 6, 11, b) + R(7, .5, 4.500, 5, '#7fb4e0') + R(7, 6, 4.500, 5.500, '#5f5f5f'),
      `<circle cx="6" cy="5" r="4.500" fill="#fff" stroke="${g}"/><circle cx="6" cy="5" r="2" fill="#3c9a5f"/>` + L('M3 11.500h6M6 9.500v2', g),
      `<path d="M1 2l3 1 3-1 4 1-1 3 1 2-3 3-2-2-3 1-2-4z" fill="#a8cdec" stroke="${b}" stroke-width=".7"/>`,
      `<path d="M7 0 12 12 7 9 1 11z" fill="#2a7fc4"/>`,
      L('M1 9a5 5 0 0 1 10 0', g) + `<path d="M1 9a5 5 0 0 1 5-5v2a3 3 0 0 0-3 3z" fill="${b}"/>` + L('M6 9l3-3', g),
      box + R(2, 3.500, 8, 5, '#bcd6ee'),
      box + L('M2.500 4h7', b) + L('M2.500 6h7', b) + L('M2.500 8h5', g),
      box + `<path d="M3 8l2-4 2 4z" fill="#3c9a5f"/><path d="M7 4h3l-1.500 4z" fill="#c9404e"/>`,
      L('M.5 1.500h9v8H.5zM2 4h6', g) + `<path d="M6 7h6L9.500 10v2L8.500 11.500V10z" fill="#fff" stroke="${g}" stroke-width=".7"/>`,
      L('M.5 1.500h11v9H.5zM.5 4.500h11M.5 7.500h11M4 1.500v9M8 1.500v9', g),
      R(0, 1, 12, 10, b) + L('M0 4.500h12M0 7.500h12M4 1v10M8 1v10', '#fff'),
      T(6, 10.500, 'R', 11, '#2a7fc4'),
      T(6.500, 10.500, 'Py', 11, '#2a7fc4'),
      ax + R(2, 2, 5, 1.500, g) + R(2, 5, 3.500, 1.500, g) + R(2, 8, 6, 1.500, g) + `<circle cx="10" cy="3" r="1.500" fill="${b}"/>`,
      R(0, 4.500, 4, 3, b) + L('M4 6h2M6 2h0M6 2v8', b) + R(7, .5, 5, 3, b) + R(7, 4.500, 5, 3, g) + R(7, 8.500, 5, 3, b),
      `<path d="M.5 1.500h11v7H5l-2 3v-3H.5z" fill="#fff" stroke="${b}"/>`,
      L('M1.500 .5h6l3 3v8h-9z', g) + L('M3.500 5.500h5M3.500 7.500h5', b),
      `<path d="M3 .5h6v4a3 3 0 0 1-6 0z" fill="#fff" stroke="${g}"/>` + L('M3 2H.5c0 2 1 3 2.500 3M9 2h2.500c0 2-1 3-2.500 3M6 7.500v2M3.500 11h5', g),
      L('M1.500 .5h6l3 3v8h-9z', g) + R(3.500, 6, 1.500, 4, '#333') + R(6, 4, 1.500, 6, '#333'),
      box + `<path d="M3 0 .5 4H3L2 7l3-4H3z" fill="${o}"/>` + R(5, 5, 5, 3, '#bcd6ee'),
      L('M.5 1.500h9v8H.5z', g) + `<path d="M3 0 .5 4H3L2 7l3-4H3z" fill="${o}"/><path d="M6 7h6L9.500 10v2L8.500 11.500V10z" fill="#fff" stroke="${g}" stroke-width=".7"/>`,
      R(0, 0, 12, 12, '#2a7fc4') + R(1, 1, 10, 10, '#fff') + `<path d="M3 9l6-6" stroke="#2a7fc4"/>` + R(0, 0, 4, 5, o) + R(8, 8, 4, 4, o),
      `<path d="M6 .5 11.500 6 6 11.500.5 6z" fill="#fff" stroke="${p}"/><circle cx="6" cy="6" r="1.500" fill="none" stroke="${p}"/>`,
      `<path d="M.5 1.500h6L11.500 6l-5 4.500h-6L5 6z" fill="#fff" stroke="${b}"/><path d="M6 3.500 8.500 6 6 8.500" fill="none" stroke="${b}"/>`
    ];
    document.getElementById('vizGrid').innerHTML = viz.map(v => `<div class="pb-vcell"><svg width="12" height="12" viewBox="0 0 12 12">${v}</svg></div>`).join('');

    // --- data tree ---
    const tableIcon = '<svg width="9" height="9" viewBox="0 0 9 9" class="mx-1" style="flex:none"><rect width="9" height="9" rx="2" fill="#605e5c"/><path d="M0 3h9M0 6h9M3 0v9M6 0v9" stroke="#f3f2f1" stroke-width=".7"/></svg>';
    const chevR = '<svg width="5" height="8" viewBox="0 0 5 8" fill="none" stroke="#666" style="flex:none"><path d="m.5.500 3.500 3.500-3.500 3.500"/></svg>';
    const names = ['Department code', '', '', '', '', 'Master Training Plan'];
    document.getElementById('tree').innerHTML = names.map(n => `<div class="pb-trow d-flex align-items-center">${chevR}${tableIcon}${n}</div>`).join('') + '<div class="pb-tcover pb-photo"></div>';
  </script>
  <script src="https://cdn.jsdelivr.net/npm/bootstrap@5.3.3/dist/js/bootstrap.bundle.min.js"></script>
</body>
</html>
